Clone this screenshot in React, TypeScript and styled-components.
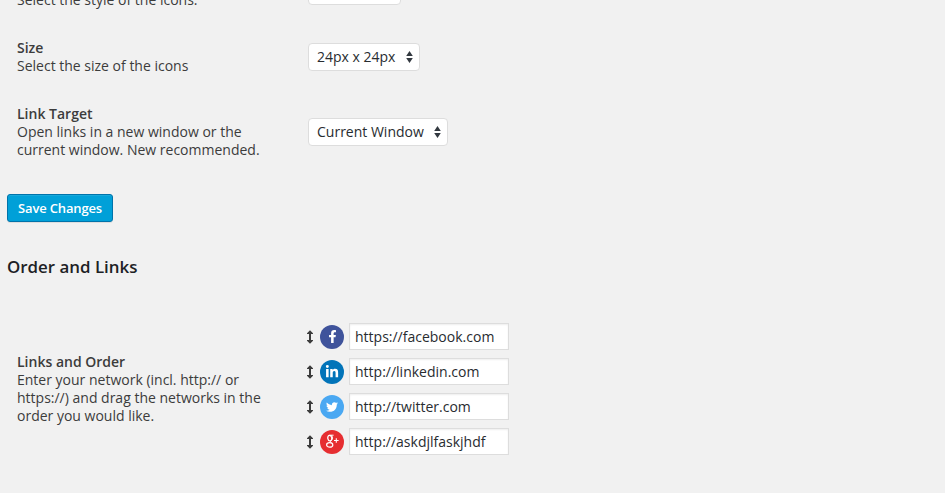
import React from "react";
import styled, { createGlobalStyle } from "styled-components";
import { FaFacebookF, FaLinkedinIn, FaTwitter } from "react-icons/fa";

const GlobalStyle = createGlobalStyle`
  * { box-sizing: border-box; }
  body {
    margin: 0;
    background: #f1f1f1;
    color: #3c3c3c;
    font: 14px/18px "Open Sans", sans-serif;
    overflow: hidden;
  }
`;

const Viewport = styled.main`
  height: 493px;
  overflow: hidden;
`;

const Page = styled.div`
  display: flex;
  flex-direction: column;
  align-items: flex-start;
  margin-top: -42px;
  padding-left: 7px;
`;

const Row = styled.section`
  display: grid;
  grid-template-columns: 291px auto;
  align-items: center;
  padding: 15px 0 15px 10px;
`;

const Label = styled.div`
  white-space: pre-line;
`;

const Title = styled.div`
  font-weight: 600;
`;

const Select = styled.button<{ $width: number }>`
  display: flex;
  align-items: center;
  justify-content: space-between;
  width: ${(p) => p.$width}px;
  height: 28px;
  padding: 0 6px 0 8px;
  border: 1px solid #ddd;
  border-radius: 4px;
  background: #fff;
  color: #282c30;
  font: 14px/18px "Open Sans", sans-serif;
  white-space: nowrap;
`;

const SaveButton = styled.button`
  width: 106px;
  height: 28px;
  margin-top: 20px;
  padding: 0 0 1px;
  border: 1px solid #0073aa;
  border-radius: 3px;
  background: #00a0d8;
  box-shadow: inset 0 1px 0 rgba(120, 200, 230, 0.2), 0 1px 0 rgba(0, 0, 0, 0.08);
  color: #fff;
  font: 600 13px/26px "Open Sans", sans-serif;
  letter-spacing: -0.17px;
  white-space: nowrap;
`;

const Heading = styled.h2`
  margin: 34px 0 30px;
  color: #1d2125;
  font-size: 16.9px;
  font-weight: 600;
  line-height: 22px;
`;

const LinkList = styled.div`
  display: flex;
  flex-direction: column;
  gap: 8px;
`;

const LinkRow = styled.div`
  display: flex;
  align-items: center;
  height: 27px;
`;

const Handle = styled.svg`
  width: 6px;
  height: 14px;
  margin: 0 7px 0 -1px;
  flex: none;
`;

const Badge = styled.span<{ $color: string }>`
  display: flex;
  align-items: center;
  justify-content: center;
  width: 24px;
  height: 24px;
  margin-right: 5px;
  border-radius: 50%;
  background: ${(p) => p.$color};
  color: #fff;
`;

const UrlInput = styled.input`
  width: 160px;
  height: 27px;
  padding: 0 5px 1px;
  border: 1px solid #ddd;
  border-radius: 0;
  background: #fff;
  box-shadow: inset 0 1px 2px rgba(0, 0, 0, 0.07);
  color: #282c30;
  font: 14px/18px "Open Sans", sans-serif;
`;

function SelectBox({ width, value }: { width: number; value: string }) {
  return (
    <Select $width={width}>
      {value}
      <svg width="7" height="12" viewBox="0 0 7 12" fill="#333940">
        <path d="M3.5 0 6.8 5H.2zM3.5 12l3.3-5H.2z" />
      </svg>
    </Select>
  );
}

function GooglePlus() {
  return (
    <svg width="15" height="15" viewBox="0 0 15 15" fill="none" stroke="#fff">
      <ellipse cx="4.8" cy="4.1" rx="2" ry="2.8" strokeWidth="1.3" transform="rotate(-12 4.8 4.1)" />
      <path d="M4.6 1.2H8.6M6.4 1.4C7.9 2.8 7.9 5 6.3 6.2C5 7.3 5.2 7.8 6.5 8.7" strokeWidth="1" />
      <ellipse cx="4.7" cy="10.9" rx="3.1" ry="2.2" strokeWidth="1.2" />
      <path d="M11.3 4.2V8.8M9 6.5H13.6" strokeWidth="1.1" />
    </svg>
  );
}

const networks = [
  { color: "#3f539b", url: "https://facebook.com", icon: <FaFacebookF size={13} /> },
  { color: "#0274b9", url: "http://linkedin.com", icon: <FaLinkedinIn size={14} /> },
  { color: "#4aa8f2", url: "http://twitter.com", icon: <FaTwitter size={12} /> },
  { color: "#e62e31", url: "http://askdjlfaskjhdf", icon: <GooglePlus /> },
];

export default function App() {
  return (
    <Viewport>
      <GlobalStyle />
      <Page>
        <Row>
          <Label>
            <Title>Style</Title>
            Select the style of the icons.
          </Label>
          <SelectBox width={93} value="Circle" />
        </Row>
        <Row>
          <Label>
            <Title>Size</Title>
            Select the size of the icons
          </Label>
          <SelectBox width={112} value="24px x 24px" />
        </Row>
        <Row>
          <Label>
            <Title>Link Target</Title>
            {"Open links in a new window or the\ncurrent window. New recommended."}
          </Label>
          <SelectBox width={140} value="Current Window" />
        </Row>
        <SaveButton>Save Changes</SaveButton>
        <Heading>Order and Links</Heading>
        <Row>
          <Label>
            <Title>Links and Order</Title>
            {"Enter your network (incl. http:// or\nhttps://) and drag the networks in the\norder you would like."}
          </Label>
          <LinkList>
            {networks.map((n) => (
              <LinkRow key={n.url}>
                <Handle viewBox="0 0 6 14" fill="#3c3c3c">
                  <path d="M3 .3 6 3.2V4H4V10H6V10.8L3 13.7 0 10.8V10H2V4H0V3.2z" />
                </Handle>
                <Badge $color={n.color}>{n.icon}</Badge>
                <UrlInput defaultValue={n.url} />
              </LinkRow>
            ))}
          </LinkList>
        </Row>
      </Page>
    </Viewport>
  );
}
